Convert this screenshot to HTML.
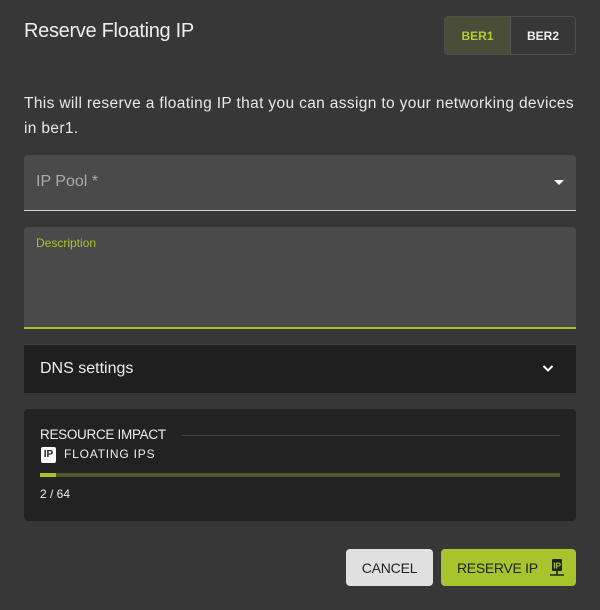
<!DOCTYPE html>
<html><head><style>
*{box-sizing:border-box;margin:0;padding:0}
body{width:600px;height:610px;background:#373737;font-family:"Liberation Sans",sans-serif;color:#eee;position:relative;overflow:hidden}
.a{position:absolute}
</style></head><body>
<div class="a" style="left:24px;top:20px;font-size:20px;font-weight:300;color:#eee;letter-spacing:-0.3px">Reserve Floating IP</div>
<div class="a" style="left:444px;top:16px;width:132px;height:39px;border:1px solid #4e4e4e;border-radius:4px;overflow:hidden;display:flex;font-size:12px;font-weight:bold">
 <div style="width:66px;background:#4a4d37;color:#b5cc2e;display:flex;align-items:center;justify-content:center;border-right:1px solid #555">BER1</div>
 <div style="flex:1;display:flex;align-items:center;justify-content:center;color:#eee">BER2</div>
</div>
<div class="a" style="left:24px;top:91px;width:570px;font-size:15.5px;line-height:25px;color:#e8e8e8;letter-spacing:0.35px;white-space:nowrap">This will reserve a floating IP that you can assign to your networking devices<br>in ber1.</div>
<div class="a" style="left:24px;top:155px;width:552px;height:56px;background:#4a4a4a;border-radius:4px 4px 0 0;border-bottom:1px solid #d0d0d0">
 <div class="a" style="left:12px;top:18px;font-size:16px;color:#aaa">IP Pool *</div>
 <div class="a" style="right:12px;top:25px;width:0;height:0;border-left:5px solid transparent;border-right:5px solid transparent;border-top:5px solid #fff"></div>
</div>
<div class="a" style="left:24px;top:227px;width:552px;height:102px;background:#4a4a4a;border-radius:4px 4px 0 0;border-bottom:2px solid #a8c42c">
 <div class="a" style="left:12px;top:9px;font-size:12px;color:#a8c42c">Description</div>
</div>
<div class="a" style="left:24px;top:344px;width:552px;height:49px;background:#1f1f1f;border-top:1px solid #444">
 <div class="a" style="left:16px;top:15px;font-size:16px;color:#eee">DNS settings</div>
 <svg class="a" style="right:22px;top:19px" width="12" height="9" viewBox="0 0 12 9"><path d="M1.5 2 L6 6.5 L10.5 2" stroke="#fff" stroke-width="2" fill="none"/></svg>
</div>
<div class="a" style="left:24px;top:409px;width:552px;height:112px;background:#222;border-radius:4px">
 <div class="a" style="left:16px;top:18px;font-size:13.5px;color:#eee;letter-spacing:-0.3px">RESOURCE IMPACT</div>
 <div class="a" style="left:158px;top:26px;width:378px;height:1px;background:#444"></div>
 <div class="a" style="left:17px;top:38px;width:15px;height:16px;background:#fff;border-radius:2px;color:#222;font-size:10px;font-weight:bold;text-align:center;line-height:16px">IP</div>
 <div class="a" style="left:40px;top:38px;font-size:12px;letter-spacing:0.8px;color:#eee">FLOATING IPS</div>
 <div class="a" style="left:16px;top:64px;width:520px;height:4px;background:#535a2a"></div>
 <div class="a" style="left:16px;top:64px;width:16px;height:4px;background:#a8c42c"></div>
 <div class="a" style="left:16px;top:78px;font-size:12px;color:#eee">2 / 64</div>
</div>
<div class="a" style="left:346px;top:549px;width:87px;height:37px;background:#e0e0e0;border-radius:4px;color:#222;font-size:14px;letter-spacing:-0.2px;display:flex;align-items:center;justify-content:center">CANCEL</div>
<div class="a" style="left:441px;top:549px;width:135px;height:37px;background:#a8c42c;border-radius:4px;color:#222;font-size:14px;letter-spacing:-0.3px;display:flex;align-items:center;padding-left:16px">RESERVE IP
 <svg style="margin-left:10px" width="18" height="20" viewBox="0 0 18 20"><rect x="4" y="1" width="10" height="12" rx="1" fill="#222"/><text x="9" y="10.5" font-size="8.5" font-weight="bold" text-anchor="middle" fill="#a8c42c" font-family="Liberation Sans">IP</text><path d="M9 13v4M2 17h14" stroke="#222" stroke-width="1.6"/></svg>
</div>
</body></html>
